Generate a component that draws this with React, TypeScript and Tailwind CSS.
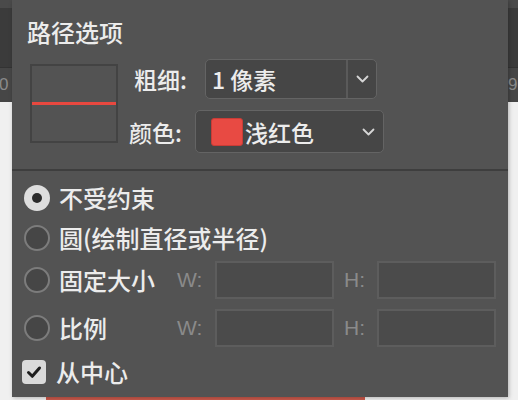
import React from "react";

const Chevron = () => (
  <svg width="13" height="8" viewBox="0 0 13 8" fill="none">
    <path d="M1.5 1.5l5 5 5-5" stroke="#d6d6d6" strokeWidth="1.8" strokeLinecap="round" strokeLinejoin="round" />
  </svg>
);

const Radio = ({ on }: { on?: boolean }) =>
  on ? (
    <div className="w-[26px] h-[26px] rounded-full bg-[#dedede] flex items-center justify-center shrink-0">
      <div className="w-[10px] h-[10px] rounded-full bg-[#2b2b2b]" />
    </div>
  ) : (
    <div className="w-[26px] h-[26px] rounded-full bg-[#464646] border-2 border-[#7c7c7c] shrink-0" />
  );

const Field = () => (
  <div className="w-[119px] h-[38px] bg-[#4b4b4b] border-2 border-[#5d5d5d] shrink-0" />
);

export default function App() {
  const cjk = { fontFamily: '"Noto Sans CJK SC", "Noto Sans", sans-serif' };
  const lat = { fontFamily: '"Liberation Sans", Arial, sans-serif' };
  return (
    <div className="relative w-[518px] h-[400px] overflow-hidden bg-[#f0f0f0]" style={cjk}>
      <div className="flex flex-col">
        <div className="h-[8px] bg-[#4a4a4a]" />
        <div className="h-[59px] bg-[#3b3b3b]" />
        <div className="h-[35px] bg-[#464646] border-t border-[#333] flex justify-between items-center text-[#8a8a8a] text-[17px]" style={lat}>
          <span className="-ml-[1px]">0</span>
          <span className="w-[10px] overflow-hidden whitespace-nowrap">90</span>
        </div>
      </div>
      <div className="absolute left-[46px] top-[397px] w-[319px] h-[3px] bg-[#c9594b]" />

      <div className="absolute left-[12px] top-0 w-[496px] h-[397px] bg-[#535353] shadow-[1px_1px_4px_rgba(0,0,0,0.25)] text-[#ececec] font-medium">
        <div className="pt-[18px] pl-[15px] text-[24px] leading-[28px]">路径选项</div>

        <div className="mt-[13px] flex">
          <div className="ml-[18px] mt-[5px] w-[88px] h-[79px] border-2 border-[#434343] flex items-center">
            <div className="w-full h-[3px] bg-[#e8483f]" />
          </div>
          <div className="ml-[16px] flex flex-col">
            <div className="flex items-center h-[40px]">
              <div className="w-[71px] text-[23px] leading-[28px]">粗细:</div>
              <div className="w-[172px] h-[40px] rounded-[5px] border border-[#646464] bg-[#464646] flex">
                <div className="flex-1 flex items-center pl-[6px] text-[23px] leading-[28px] border-r-2 border-[#5a5a5a]">1 像素</div>
                <div className="w-[28px] flex items-center justify-center">
                  <Chevron />
                </div>
              </div>
            </div>
            <div className="mt-[11px] -ml-[5px] flex items-center h-[43px]">
              <div className="w-[66px] text-[23px] leading-[28px]">颜色:</div>
              <div className="w-[189px] h-[43px] rounded-[5px] border border-[#646464] bg-[#464646] flex items-center">
                <div className="ml-[15px] w-[32px] h-[28px] rounded-[3px] bg-[#e84a43] border border-[#c93c36]" />
                <div className="ml-[2px] text-[23px] leading-[28px]">浅红色</div>
                <div className="ml-auto mr-[8px] flex items-center">
                  <Chevron />
                </div>
              </div>
            </div>
          </div>
        </div>

        <div className="mt-[16px] h-[2px] bg-[#3e3e3e]" />

        <div className="flex flex-col pl-[12px]">
          <div className="mt-[14px] h-[26px] flex items-center">
            <Radio on />
            <div className="ml-[9px] text-[24px] leading-[28px]">不受约束</div>
          </div>
          <div className="mt-[14px] h-[26px] flex items-center">
            <Radio />
            <div className="ml-[9px] text-[24px] leading-[28px] whitespace-nowrap">圆(绘制直径或半径)</div>
          </div>
          <div className="mt-[10px] h-[38px] flex items-center">
            <Radio />
            <div className="ml-[9px] w-[118px] text-[24px] leading-[28px]">固定大小</div>
            <div className="w-[38px] text-[21px] font-normal text-[#8a8a8a]" style={lat}>W:</div>
            <Field />
            <div className="ml-[10px] w-[33px] text-[21px] font-normal text-[#8a8a8a]" style={lat}>H:</div>
            <Field />
          </div>
          <div className="mt-[10px] h-[38px] flex items-center">
            <Radio />
            <div className="ml-[9px] w-[118px] text-[24px] leading-[28px]">比例</div>
            <div className="w-[38px] text-[21px] font-normal text-[#8a8a8a]" style={lat}>W:</div>
            <Field />
            <div className="ml-[10px] w-[33px] text-[21px] font-normal text-[#8a8a8a]" style={lat}>H:</div>
            <Field />
          </div>
          <div className="mt-[13px] h-[24px] flex items-center -ml-[2px]">
            <div className="w-[24px] h-[24px] rounded-[4px] bg-[#dadada] flex items-center justify-center">
              <svg width="16" height="14" viewBox="0 0 16 14" fill="none">
                <path d="M2.5 7.5l3.8 3.8L13.5 3" stroke="#1e1e1e" strokeWidth="3" strokeLinecap="round" strokeLinejoin="round" />
              </svg>
            </div>
            <div className="ml-[10px] text-[24px] leading-[28px]">从中心</div>
          </div>
        </div>
      </div>
    </div>
  );
}
